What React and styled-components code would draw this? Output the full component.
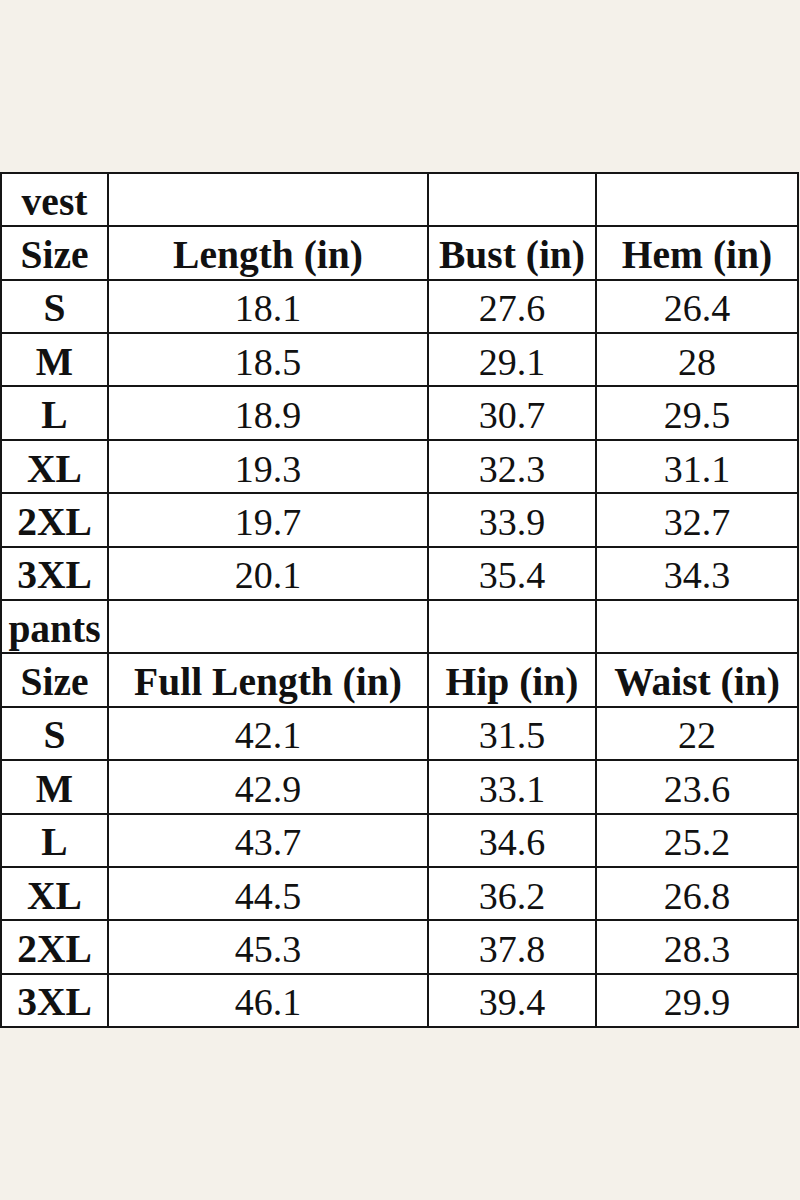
import React from 'react';
import styled, { createGlobalStyle } from 'styled-components';

const Global = createGlobalStyle`
  html, body { margin: 0; padding: 0; }
  body { background: #f4f1ea; }
`;

const Page = styled.div`
  min-height: 1200px;
  display: flex;
  align-items: center;
  justify-content: flex-start;
`;

const Grid = styled.div`
  display: grid;
  grid-template-columns: 105px 318px 166px 200px;
  grid-auto-rows: 51.4px;
  gap: 2px;
  padding: 2px;
  background: #151515;
  width: max-content;
`;

const Cell = styled.div`
  background: #fff;
  display: flex;
  align-items: center;
  justify-content: center;
  padding-top: 4px;
  box-sizing: border-box;
  font-family: "Liberation Serif", "Times New Roman", serif;
  font-size: ${p => (p.bold ? '39.5px' : '38px')};
  font-weight: ${p => (p.bold ? 700 : 400)};
  color: #111;
  white-space: nowrap;
`;

const sections = [
  {
    name: 'vest',
    head: ['Length (in)', 'Bust (in)', 'Hem (in)'],
    rows: [
      ['S', '18.1', '27.6', '26.4'],
      ['M', '18.5', '29.1', '28'],
      ['L', '18.9', '30.7', '29.5'],
      ['XL', '19.3', '32.3', '31.1'],
      ['2XL', '19.7', '33.9', '32.7'],
      ['3XL', '20.1', '35.4', '34.3'],
    ],
  },
  {
    name: 'pants',
    head: ['Full Length (in)', 'Hip (in)', 'Waist (in)'],
    rows: [
      ['S', '42.1', '31.5', '22'],
      ['M', '42.9', '33.1', '23.6'],
      ['L', '43.7', '34.6', '25.2'],
      ['XL', '44.5', '36.2', '26.8'],
      ['2XL', '45.3', '37.8', '28.3'],
      ['3XL', '46.1', '39.4', '29.9'],
    ],
  },
];

export default function App() {
  return (
    <>
      <Global />
      <Page>
        <Grid>
          {sections.map(s => (
            <React.Fragment key={s.name}>
              <Cell bold>{s.name}</Cell>
              <Cell />
              <Cell />
              <Cell />
              <Cell bold>Size</Cell>
              {s.head.map(h => <Cell bold key={h}>{h}</Cell>)}
              {s.rows.map(r => r.map((v, i) => (
                <Cell bold={i === 0} key={s.name + r[0] + i}>{v}</Cell>
              )))}
            </React.Fragment>
          ))}
        </Grid>
      </Page>
    </>
  );
}
